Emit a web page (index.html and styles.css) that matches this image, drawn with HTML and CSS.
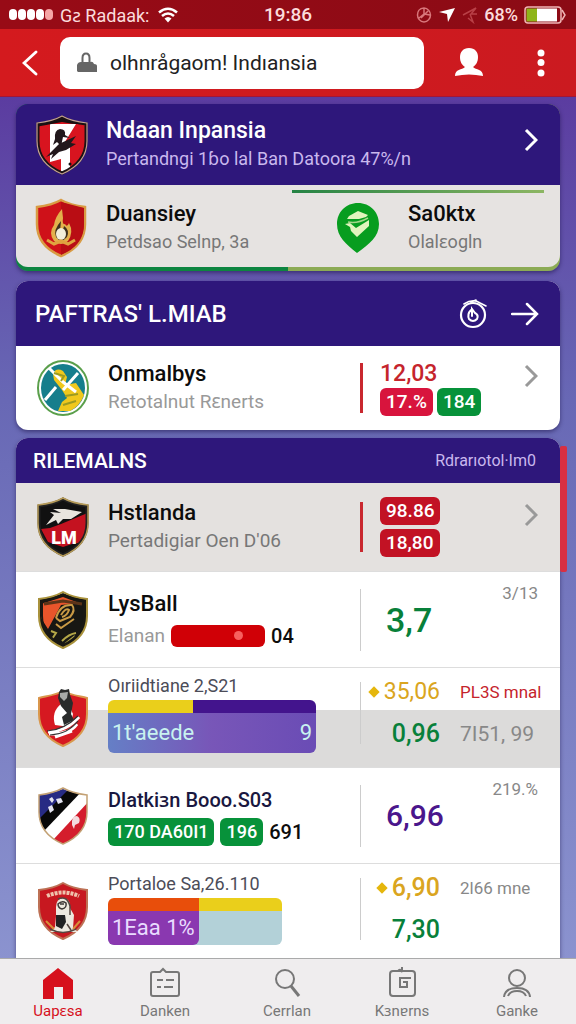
FILE: index.html
```html
<!DOCTYPE html>
<html lang="id">
<head>
    <meta charset="UTF-8">
    <meta name="viewport" content="width=device-width, initial-scale=1.0">
    <title>Indonesia</title>
    <link rel="stylesheet" href="styles.css">
</head>
<body>

    <div class="status">
        <div class="status-left">
            <span class="signal"><i></i><i></i><i></i><i></i><i class="weak"></i></span>
            <span>Gƨ Radaak:</span>
            <svg class="wifi" viewBox="0 0 20 16" width="20" height="16">
                <path d="M1 5.500Q10-2 19 5.500M4 9Q10 4 16 9" fill="none" stroke="#fff" stroke-width="2.600"/>
                <path d="M6.500 11.500Q10 8.500 13.500 11.500L10 15.500Z" fill="#fff"/>
            </svg>
        </div>
        <div class="time">19:86</div>
        <div class="status-right">
            <svg viewBox="0 0 16 18" width="16" height="18" fill="none" stroke="#d9777b" stroke-width="1.500">
                <path d="M8 2C3 2 1.500 6 1.500 9S4 16 8 16S14.500 12 14.500 9S12 2 8 2ZM8 2V8L3 12M8 8L14 9M5 12L12 5"/>
            </svg>
            <svg viewBox="0 0 18 16" width="18" height="16"><path d="M1 5L17 1L10 15L9 7Z" fill="#fff"/></svg>
            <svg viewBox="0 0 16 18" width="16" height="18" fill="none" stroke="#b94047" stroke-width="1.500">
                <path d="M1 9L14 2L9 8H15M8 8L11 16L6 12"/>
            </svg>
            <span class="percent">68%</span>
            <svg viewBox="0 0 43 18" width="43" height="18">
                <rect x="1" y="1" width="36" height="16" rx="3" fill="#8d0a15" stroke="#f0b5b5" stroke-width="1.500"/>
                <rect x="2.500" y="2.500" width="11" height="13" fill="#8fb51a"/>
                <rect x="13" y="2.500" width="20" height="13" fill="#fff"/>
                <path d="M38 4L41 9L38 14" fill="none" stroke="#f0b5b5" stroke-width="1.500"/>
            </svg>
        </div>
    </div>

    <header class="topbar">
        <button class="icon-btn back" aria-label="Kembali">
            <svg viewBox="0 0 16 26" width="16" height="26"><path d="M14 2L2 13L14 24" fill="none" stroke="#fff" stroke-width="2.800" stroke-linecap="round"/></svg>
        </button>
        <label class="search">
            <svg viewBox="0 0 20 21" width="20" height="21">
                <path d="M5.500 10V6Q5.500 1.500 9 1.500T12.500 6V10" fill="none" stroke="#666" stroke-width="2"/>
                <path d="M0 19V13Q1 10 4 10H13Q16 9 17 12Q20 12 20 14V20H1Z" fill="#666"/>
            </svg>
            <input type="text" value="olhnrågaom! Indıansia" aria-label="Cari">
        </label>
        <button class="icon-btn profile" aria-label="Profil">
            <svg viewBox="0 0 28 29" width="28" height="29"><path d="M14 0C8 0 5 4 5 9C5 14 7 17 10 19C7 22 0 21 0 28Q14 25 28 28C28 21 21 22 18 19C21 17 23 14 23 9C23 4 20 0 14 0Z" fill="#fff"/></svg>
        </button>
        <button class="icon-btn more" aria-label="Menu">
            <svg viewBox="0 0 8 28" width="8" height="28" fill="#fff"><circle cx="4" cy="4" r="3.500"/><circle cx="4" cy="13.500" r="3.500"/><circle cx="4" cy="24" r="3.500"/></svg>
        </button>
    </header>

    <main>
        <section class="card match">
            <a class="match-head" href="#">
                <svg class="crest" viewBox="0 0 54 60">
                    <defs>
                        <clipPath id="shield"><path d="M27 3C20 6 11 8 3 9V26C3 42 13 52 27 58C41 52 51 42 51 26V9C43 8 34 6 27 3Z"/></clipPath>
                    </defs>
                    <g clip-path="url(#shield)">
                        <rect width="54" height="60" fill="#d8141f"/>
                        <path d="M15 9H41L25 35L35 29V60H26V44L15 47Z" fill="#fff"/>
                        <path d="M0 0H54V9Q40 10 27 7Q12 10 0 12Z" fill="#171112"/>
                        <path d="M20 24Q19 15 25 14Q31 14 30 20L35 23L28 22L26 31L22 27L18 30ZM11 42L24 29L41 21L36 28L41 29L31 35L24 37L16 44L18 39Z" fill="#22181c"/>
                    </g>
                    <path d="M27 2C20 6 11 8 3 9V26C3 42 13 52 27 58C41 52 51 42 51 26V9C43 8 34 6 27 2Z" fill="none" stroke="#1a1214" stroke-width="3"/>
                    <path d="M27 1C20 5 11 7 2 8V26C2 43 13 53 27 59C41 53 52 43 52 26V8C43 7 34 5 27 1Z" fill="none" stroke="#c4a192" stroke-width="1.200"/>
                    <circle cx="35" cy="49" r="1.500" fill="#111"/>
                </svg>
                <div class="text">
                    <h2>Ndaan Inpansia</h2>
                    <p>Pertandngi 1ɓo lal Ban Datoora 47%/n</p>
                </div>
                <svg class="chevron" viewBox="0 0 14 24"><path d="M2 2L12 12L2 22"/></svg>
            </a>
            <div class="teams">
                <div class="team">
                    <svg class="crest" viewBox="0 0 54 60">
                        <path d="M27 2C20 6 11 8 3 9V26C3 42 13 52 27 58C41 52 51 42 51 26V9C43 8 34 6 27 2Z" fill="#cf1119" stroke="#d99b43" stroke-width="2.500"/>
                        <path d="M27 4V57C41 51 50 42 50 26V10Z" fill="#b90d14"/>
                        <path d="M28 11Q21 19 20 27Q14 35 20 43Q27 49 34 43Q40 34 35 25Q33 30 31 26Q28 27 29 20Z" fill="#e3b04b"/>
                        <path d="M27 23Q19 32 22 39Q27 46 33 39Q36 32 30 28Q29 34 26 33Z" fill="#3e301d"/>
                        <ellipse cx="27" cy="36" rx="5" ry="6" fill="#f2eed9"/>
                        <path d="M13 42L20 46L27 43L34 46L41 42" fill="none" stroke="#e0a33f" stroke-width="3"/>
                    </svg>
                    <div class="text">
                        <h3>Duansiey</h3>
                        <p>Petdsao Selnp, 3a</p>
                    </div>
                </div>
                <div class="team away">
                    <svg class="pin" viewBox="0 0 42 50">
                        <path d="M21 0C9 0 0 9 0 21C0 34 9 41 20 50C32 41 42 34 42 21C42 9 33 0 21 0Z" fill="#079d1f"/>
                        <path d="M12 13L21 8L31 12L29 14L22 16L10 16Z" fill="#e1f4bd"/>
                        <path d="M8 21L13 20L19 25L32 17V23L20 34L14 28L13 24Z" fill="#e1f4bd"/>
                        <path d="M11 19Q20 21 31 15" stroke="#a5d68a" stroke-width="1.500" fill="none"/>
                    </svg>
                    <div class="text">
                        <h3>Sa0ktx</h3>
                        <p>Olalɛogln</p>
                    </div>
                </div>
            </div>
        </section>

        <section class="card">
            <div class="card-head tall">
                <h2>PAFTRAS' L.MIAB</h2>
                <button class="icon-btn" aria-label="Waktu">
                    <svg viewBox="0 0 28 30" width="28" height="30" fill="none" stroke="#fff" stroke-linecap="round">
                        <circle cx="14" cy="16" r="12" stroke-width="2.200"/>
                        <path d="M5 5Q14-1 21 4L27 7M12 3L17 1" stroke-width="1.600"/>
                        <path d="M12 11Q8 15 10 20Q14 24 18 20Q20 16 16 14L13 10V17" stroke-width="2"/>
                    </svg>
                </button>
                <button class="icon-btn" aria-label="Lanjut">
                    <svg viewBox="0 0 28 24" width="28" height="24"><path d="M1 12H26M16 2L26 12L16 22" fill="none" stroke="#fff" stroke-width="2.500" stroke-linecap="round"/></svg>
                </button>
            </div>
            <a class="row short" href="#">
                <svg class="crest" viewBox="0 0 54 60">
                    <ellipse cx="27" cy="30" rx="25" ry="27" fill="#fff" stroke="#5a9f4b" stroke-width="2"/>
                    <ellipse cx="27" cy="30" rx="22" ry="24" fill="#167e8c"/>
                    <path d="M17 16Q20 9 27 13L31 19L29 27L40 25L48 37Q44 48 34 53L22 53L26 44L31 40L26 32L18 22Z" fill="#f0c81d"/>
                    <path d="M13 10L27 24L40 34M42 15L27 32M9 42L20 29" stroke="#fff" stroke-width="3" fill="none"/>
                    <path d="M18 15L28 18L25 23M29 38L42 36M27 47L40 43" stroke="#9d9b21" stroke-width="2" fill="none"/>
                </svg>
                <div class="text">
                    <h3>Onmalbys</h3>
                    <p class="light">Retotalnut Rɛnerts</p>
                </div>
                <div class="stats red-line">
                    <div>
                        <div class="num red">12,03</div>
                        <div class="tags"><span class="tag pink">17.%</span><span class="tag green">184</span></div>
                    </div>
                    <svg class="chevron" viewBox="0 0 14 24"><path d="M2 2L12 12L2 22"/></svg>
                </div>
            </a>
        </section>

        <section class="card list">
            <div class="card-head">
                <h2>RILEMALNS</h2>
                <span>Rdrarıotol·Im0</span>
            </div>
            <a class="row first" href="#">
                <svg class="crest" viewBox="0 0 54 60">
                    <g clip-path="url(#shield)">
                        <rect width="54" height="60" fill="#111"/>
                        <path d="M54 15V46H39L27 50L12 45L5 32L14 31L25 27Z" fill="#c41220"/>
                        <path d="M10 28L18 18L14 15L25 16L17 12H29L46 15L35 22L27 22L22 27L20 23Z" fill="#e9e5de"/>
                    </g>
                    <text class="crest-text" x="28" y="47" text-anchor="middle">LM</text>
                    <path d="M27 2C20 6 11 8 3 9V26C3 42 13 52 27 58C41 52 51 42 51 26V9C43 8 34 6 27 2Z" fill="none" stroke="#222" stroke-width="3"/>
                    <path d="M27 1C20 5 11 7 2 8V26C2 43 13 53 27 59C41 53 52 43 52 26V8C43 7 34 5 27 1Z" fill="none" stroke="#b59a58" stroke-width="1.500"/>
                </svg>
                <div class="text">
                    <h3>Hstlanda</h3>
                    <p>Pertadigiar Oen D'06</p>
                </div>
                <div class="stats red-line">
                    <div class="stack"><span class="tag red-bg">98.86</span><span class="tag red-bg">18,80</span></div>
                    <svg class="chevron" viewBox="0 0 14 24"><path d="M2 2L12 12L2 22"/></svg>
                </div>
            </a>

            <div class="row">
                <svg class="crest" viewBox="0 0 54 60">
                    <g clip-path="url(#shield)">
                        <rect width="54" height="60" fill="#171713"/>
                        <path d="M5 14L27 7L43 13L25 15L12 39L5 28Z" fill="#e8552b"/>
                        <path d="M8 14L27 11L46 14" stroke="#5c3418" stroke-width="3" fill="none"/>
                        <path d="M20 28Q24 14 36 15Q40 20 34 27L24 31L20 28M25 25Q30 17 33 20Q31 26 26 27M20 34L25 38L38 29" fill="none" stroke="#c99a45" stroke-width="2"/>
                    </g>
                    <path d="M15 41L20 43L16 49M26 51Q33 44 40 43M29 54L39 46" stroke="#b3a748" stroke-width="2" fill="none"/>
                    <path d="M27 2C20 6 11 8 3 9V26C3 42 13 52 27 58C41 52 51 42 51 26V9C43 8 34 6 27 2Z" fill="none" stroke="#a9923c" stroke-width="2"/>
                    <path d="M27 5C20 8 13 10 6 11V26C6 40 15 50 27 55C39 50 48 40 48 26V11C41 10 34 8 27 5Z" fill="none" stroke="#191813" stroke-width="2"/>
                </svg>
                <div class="text">
                    <h3>LysBall</h3>
                    <div class="inline"><p class="light">Elanan</p><span class="meter"><i></i></span><b>04</b></div>
                </div>
                <div class="stats">
                    <div class="big green-text">3,7</div>
                    <div class="note top">3/13</div>
                </div>
            </div>

            <div class="row banded">
                <svg class="crest" viewBox="0 0 54 60">
                    <path d="M27 3C20 7 11 8 3 10V26C3 42 13 52 27 58C41 52 51 42 51 26V10C43 8 34 7 27 3Z" fill="#d61921" stroke="#d9974c" stroke-width="2"/>
                    <path d="M25 16Q15 24 19 37L34 39L37 26L32 15Z" fill="#fff"/>
                    <path d="M23 4L25 1L29 2L33 1L34 7L37 15L35 26L38 32L28 37L26 29L31 25L25 18L22 10Z" fill="#292b2b"/>
                    <path d="M24 5L32 4L31 10L28 13L24 9Z" fill="#a7aaa8"/>
                    <path d="M12 44Q31 43 43 29M13 46Q33 47 41 36M19 49L36 43" stroke="#fff" stroke-width="3" fill="none"/>
                    <path d="M11 43Q28 42 42 28M14 47Q32 46 42 33" stroke="#333" stroke-width="1.200" fill="none"/>
                </svg>
                <div class="text">
                    <h4>Oıriidtiane 2,S21</h4>
                    <div class="bar wide">
                        <div class="bar-top"><i class="yellow"></i><i class="indigo"></i></div>
                        <div class="bar-body"><span>1t'aeede</span><span>9</span></div>
                    </div>
                </div>
                <div class="stats pairs">
                    <div class="num amber"><i class="diamond"></i>35,06</div><div class="note red">PL3S mnal</div>
                    <div class="num mid green-text">0,96</div><div class="note large">7I51, 99</div>
                </div>
            </div>

            <div class="row">
                <svg class="crest" viewBox="0 0 54 60">
                    <g clip-path="url(#shield)">
                        <rect width="54" height="60" fill="#fff"/>
                        <path d="M0 0H37L3 36Z" fill="#272b84"/>
                        <path d="M2 34L33 3H48L8 45Z" fill="#080808"/>
                        <path d="M17 54L54 14V60H23Z" fill="#d41d2c"/>
                        <path d="M13 13L16 11L18 14L16 17ZM20 13L25 12L27 16L22 18ZM12 21L16 19L18 24L14 27Z" fill="#e4e4f0"/>
                        <path d="M36 35Q37 30 41 30Q45 32 43 37L39 39L38 43L36 39Z" fill="#f3dcdf"/>
                    </g>
                    <path d="M27 2C20 6 11 8 3 9V26C3 42 13 52 27 58C41 52 51 42 51 26V9C43 8 34 6 27 2Z" fill="none" stroke="#c3a174" stroke-width="1.500"/>
                </svg>
                <div class="text">
                    <h3 class="navy">Dlatkiɜn Booo.S03</h3>
                    <div class="inline"><span class="tag green">170 DA60I1</span><span class="tag green">196</span><b>691</b></div>
                </div>
                <div class="stats">
                    <div class="big violet">6,96</div>
                    <div class="note top">219.%</div>
                </div>
            </div>

            <div class="row last">
                <svg class="crest" viewBox="0 0 54 60">
                    <path d="M27 2C20 6 11 8 3 9V26C3 42 13 52 27 58C41 52 51 42 51 26V9C43 8 34 6 27 2Z" fill="#c71820" stroke="#bd7155" stroke-width="2"/>
                    <path d="M11 15Q27 8 43 15" fill="none" stroke="#efc3ad" stroke-width="4" stroke-dasharray="3 1"/>
                    <path d="M20 26Q20 18 27 17Q35 18 34 27L38 34L37 47L42 51H14L19 46L20 35Z" fill="#eee9df"/>
                    <path d="M20 34L29 34L30 41L26 48L20 45Z" fill="#222"/>
                    <path d="M22 23Q26 19 30 22Q31 27 26 28Q22 27 22 23ZM24 23H28" fill="none" stroke="#3d3937" stroke-width="1.500"/>
                    <path d="M22 18Q31 14 34 25L34 34M31 43L35 49M14 48Q27 55 40 48" fill="none" stroke="#554740" stroke-width="1.500"/>
                    <path d="M10 40L18 48M44 40L37 48" stroke="#d88e39" stroke-width="2"/>
                </svg>
                <div class="text">
                    <h4>Portaloe Sa,26.110</h4>
                    <div class="bar split">
                        <div class="bar-top"><i class="orange"></i><i class="yellow"></i></div>
                        <div class="bar-body"><span>1Eaa 1%</span><span></span></div>
                    </div>
                </div>
                <div class="stats pairs">
                    <div class="num mid amber"><i class="diamond"></i>6,90</div><div class="note">2l66 mne</div>
                    <div class="num mid green-text">7,30</div>
                </div>
            </div>
        </section>
    </main>

    <nav class="tabs">
        <a class="active" href="#">
            <svg viewBox="0 0 32 32"><path d="M16 1L31 13V32H21V20H12V32H1V13Z" fill="#d6101c"/></svg>
            <span>Uapɛsa</span>
        </a>
        <a href="#">
            <svg viewBox="0 0 32 32"><path d="M4 5H11L14 2L17 5H28Q30 5 30 7V27Q30 29 28 29H4Q2 29 2 27V7Q2 5 4 5ZM8 13H14M17 13H25M8 20H12M15 20H24"/></svg>
            <span>Danken</span>
        </a>
        <a href="#">
            <svg viewBox="0 0 32 32"><circle cx="14" cy="12" r="9"/><path d="M20 19L28 29" stroke-width="3"/></svg>
            <span>Cerrlan</span>
        </a>
        <a href="#">
            <svg viewBox="0 0 32 32"><path d="M7 4H12Q14 1 16 5V0M18 4H26Q29 4 29 7V26Q29 29 26 29H7Q4 29 4 26V7Q4 4 7 4ZM25 11H14V20H21V15H17"/></svg>
            <span>Kɜnɐrns</span>
        </a>
        <a href="#">
            <svg viewBox="0 0 32 32"><circle cx="16" cy="11" r="8"/><path d="M3 30Q4 21 16 21T29 30M7 29Q9 24 16 24T25 29"/></svg>
            <span>Ganke</span>
        </a>
    </nav>

</body>
</html>
```
FILE: styles.css
```css
* {
    box-sizing: border-box;
    margin: 0;
    padding: 0;
}

body {
    font-family: Roboto, "Noto Sans", sans-serif;
    min-height: 100vh;
    display: flex;
    flex-direction: column;
    background: linear-gradient(#5b3ca0 96px, #6868b5 400px, #8b93cf 960px);
    color: #0c0c0c;
}

a {
    color: inherit;
    text-decoration: none;
}

svg {
    flex: none;
}

/* status bar */
.status {
    display: grid;
    grid-template-columns: 1fr auto 1fr;
    align-items: center;
    height: 29px;
    padding: 0 9px;
    background: linear-gradient(90deg, #980b16, #8b0b15);
    color: #fbdcdc;
    font-size: 18px;
}

.status-left,
.status-right {
    display: flex;
    align-items: center;
    gap: 7px;
}

.status-right {
    justify-content: flex-end;
    gap: 6px;
}

.percent {
    font-weight: 500;
}

.wifi {
    margin-left: 2px;
}

.signal {
    display: flex;
    gap: 1px;
}

.signal i {
    width: 8px;
    height: 11px;
    border-radius: 4px;
    background: #fff;
}

.signal .weak {
    background: #f5a5a5;
}

.time {
    font-size: 19px;
    font-weight: 500;
}

/* header */
.topbar {
    display: flex;
    align-items: center;
    height: 68px;
    padding: 0 31px 0 22px;
    background: linear-gradient(90deg, #d41a1e, #cb1a20);
    border-bottom: 1px solid #a31538;
}

.icon-btn {
    display: flex;
    background: none;
    border: none;
    cursor: pointer;
}

.search {
    display: flex;
    align-items: center;
    gap: 13px;
    flex: 1;
    height: 52px;
    margin: 0 31px 0 22px;
    padding: 0 17px;
    background: #fff;
    border-radius: 10px;
}

.search input {
    flex: 1;
    min-width: 0;
    border: none;
    outline: none;
    background: none;
    font: 21px Roboto, "Noto Sans", sans-serif;
    color: #222;
}

.profile {
    margin-right: 54px;
}

/* cards */
main {
    flex: 1;
    display: flex;
    flex-direction: column;
    gap: 8px;
    padding: 7px 16px 0;
}

.card {
    border-radius: 12px;
    background: #fff;
    box-shadow: 0 2px 4px rgba(20, 10, 60, 0.5);
}

.crest {
    width: 54px;
    height: 60px;
}

.crest-text {
    font-size: 18px;
    font-weight: 900;
    fill: #fff;
}

.text {
    flex: 1;
    min-width: 0;
    white-space: nowrap;
}

h2 {
    font-size: 23px;
    font-weight: 500;
    line-height: 28px;
}

h3 {
    font-size: 22px;
    font-weight: 500;
    line-height: 28px;
}

h4 {
    font-size: 18px;
    font-weight: 400;
    line-height: 24px;
    color: #4c4c58;
}

p {
    font-size: 19px;
    line-height: 28px;
    color: #777;
}

.light {
    color: #999;
}

.chevron {
    width: 14px;
    height: 24px;
    fill: none;
    stroke: #999;
    stroke-width: 3;
}

/* match card */
.match {
    margin-bottom: 2px;
    padding-bottom: 4px;
    background: linear-gradient(90deg, #0d8540 50%, #8cab55 50%);
}

.match p {
    font-size: 18px;
}

.match-head {
    display: flex;
    align-items: center;
    gap: 17px;
    height: 81px;
    padding: 0 22px 0 19px;
    border-radius: 12px 12px 0 0;
    background: #2e177b;
    color: #fff;
}

.match-head p {
    color: #c9b8ee;
}

.match-head .chevron {
    align-self: flex-start;
    margin-top: 24px;
    stroke: #fff;
}

.teams {
    display: grid;
    grid-template-columns: 1fr 1fr;
    height: 82px;
    padding: 4px 16px 0 0;
    border-radius: 0 0 12px 12px;
    background: #e6e3e1;
}

.team {
    display: flex;
    align-items: center;
    gap: 18px;
    padding-left: 18px;
}

.away {
    gap: 29px;
    margin: 1px 0 4px 12px;
    padding-left: 45px;
    border-top: 3px solid;
    border-image: linear-gradient(90deg, #258344, #8db663) 1;
}

.pin {
    width: 42px;
    height: 50px;
}

/* card headings */
.card-head {
    display: flex;
    align-items: center;
    height: 45px;
    padding: 0 24px 0 17px;
    border-radius: 12px 12px 0 0;
    background: #2e177b;
    color: #fff;
}

.card-head h2 {
    flex: 1;
    font-size: 21px;
}

.card-head span {
    font-size: 16px;
    color: #c9b8ee;
}

.tall {
    gap: 24px;
    height: 65px;
    padding: 0 21px 0 19px;
}

.tall h2 {
    font-size: 24px;
}

/* rows */
.row {
    display: flex;
    align-items: center;
    gap: 18px;
    min-height: 96px;
    padding-left: 20px;
    border-bottom: 1px solid #ddd;
}

.short {
    min-height: 84px;
    border-bottom: none;
}

.first {
    min-height: 89px;
    background: #e4e1df;
}

.banded {
    min-height: 100px;
    background: linear-gradient(#fff 42px, #dcdbda 42px);
}

.last {
    min-height: 94px;
    border-bottom: none;
}

.banded .text,
.last .text {
    align-self: flex-start;
    padding-top: 6px;
}

.last .text {
    padding-top: 8px;
}

.list {
    position: relative;
    flex: 1;
    border-radius: 12px 12px 0 0;
}

/* scroll marker on the edge of the list */
.list::after {
    content: "";
    position: absolute;
    top: 8px;
    right: -7px;
    width: 7px;
    height: 126px;
    border-radius: 2px;
    background: #d92f42;
}

/* the divider is shorter than the cell */
.stats {
    display: flex;
    align-items: center;
    justify-content: space-between;
    width: 200px;
    min-height: 74px;
    padding: 0 22px 0 26px;
    background: linear-gradient(#ccc, #ccc) left center / 1px 62px no-repeat;
}

.red-line {
    min-height: 60px;
    padding-left: 20px;
    background: linear-gradient(#c9282f, #c9282f) left center / 3px 50px no-repeat;
}

.red-line .chevron {
    align-self: flex-start;
    margin-top: 6px;
}

.pairs {
    display: grid;
    grid-template-columns: 80px 1fr;
    gap: 18px 20px;
    align-self: flex-start;
    align-content: center;
    min-height: 66px;
    margin-top: 12px;
    padding: 0;
}

.num {
    display: flex;
    align-items: center;
    justify-content: flex-end;
    gap: 6px;
    font-size: 23px;
    line-height: 24px;
}

.red-line .num {
    justify-content: flex-start;
    font-weight: 500;
    line-height: 28px;
}

.mid {
    font-size: 25px;
    font-weight: 500;
}

.big {
    font-size: 34px;
    font-weight: 500;
}

.violet {
    font-size: 30px;
    color: #4a168c;
}

.note {
    font-size: 17px;
    color: #888;
    white-space: nowrap;
}

.large {
    font-size: 21px;
}

.top {
    align-self: flex-start;
}

.red {
    color: #c5242c;
}

.amber {
    color: #daa520;
}

.green-text {
    color: #08803a;
}

.navy {
    font-size: 20px;
    color: #191740;
}

.diamond {
    width: 8px;
    height: 8px;
    background: #e5b60c;
    transform: rotate(45deg);
}

/* tags */
.tags {
    display: flex;
    gap: 4px;
}

.stack {
    display: grid;
    gap: 4px;
}

.tag {
    padding: 0 6px;
    border-radius: 6px;
    font-size: 19px;
    font-weight: 500;
    line-height: 28px;
    color: #fff;
}

.pink {
    background: #d8143d;
}

.green {
    background: #07923a;
}

.red-bg {
    background: #c21224;
}

.inline {
    display: flex;
    align-items: center;
    gap: 6px;
    margin-top: 4px;
}

.inline b {
    font-size: 20px;
    font-weight: 500;
}

.inline .tag {
    font-size: 18px;
}

.meter {
    display: flex;
    align-items: center;
    justify-content: flex-end;
    width: 94px;
    height: 22px;
    padding-right: 22px;
    border-radius: 6px;
    background: #d00006;
}

.meter i {
    width: 9px;
    height: 9px;
    border-radius: 50%;
    background: #f7605f;
}

/* bars */
.bar {
    margin-top: 2px;
    border-radius: 6px;
    overflow: hidden;
    font-size: 22px;
    color: #e9dcff;
}

.wide {
    width: 208px;
}

.split {
    width: 174px;
}

.bar-top {
    display: grid;
    grid-template-columns: 85fr 123fr;
    height: 13px;
}

.bar-body {
    display: flex;
    justify-content: space-between;
    padding: 0 4px;
    line-height: 40px;
    background: linear-gradient(90deg, #657fc6, #7856b8 50%, #6a4cb5);
}

.wide .bar-body {
    color: #c8f2f0;
}

.split .bar-top,
.split .bar-body {
    display: grid;
    grid-template-columns: 91fr 83fr;
}

.split .bar-body {
    padding: 0;
    line-height: 34px;
    background: #b3d1d8;
}

.split .bar-body span:first-child {
    padding-left: 4px;
    border-radius: 0 0 6px 0;
    background: #8a38b0;
}

.yellow {
    background: #eacf1b;
}

.indigo {
    background: #43148d;
}

.orange {
    background: #e84e0b;
}

/* bottom navigation */
.tabs {
    position: relative;
    display: grid;
    grid-template-columns: 107fr 122fr 115fr 115fr 90px;
    height: 66px;
    padding: 8px 14px 0 13px;
    background: #efedee;
    border-top: 1px solid #aaa;
}

.tabs a {
    display: flex;
    flex-direction: column;
    align-items: center;
    gap: 2px;
    width: 90px;
    font-size: 15px;
    line-height: 20px;
    color: #777;
}

.tabs svg {
    width: 32px;
    height: 32px;
    fill: none;
    stroke: #777;
    stroke-width: 2;
}

.tabs .active {
    color: #d6101c;
}

.tabs .active svg {
    stroke: none;
}
```
